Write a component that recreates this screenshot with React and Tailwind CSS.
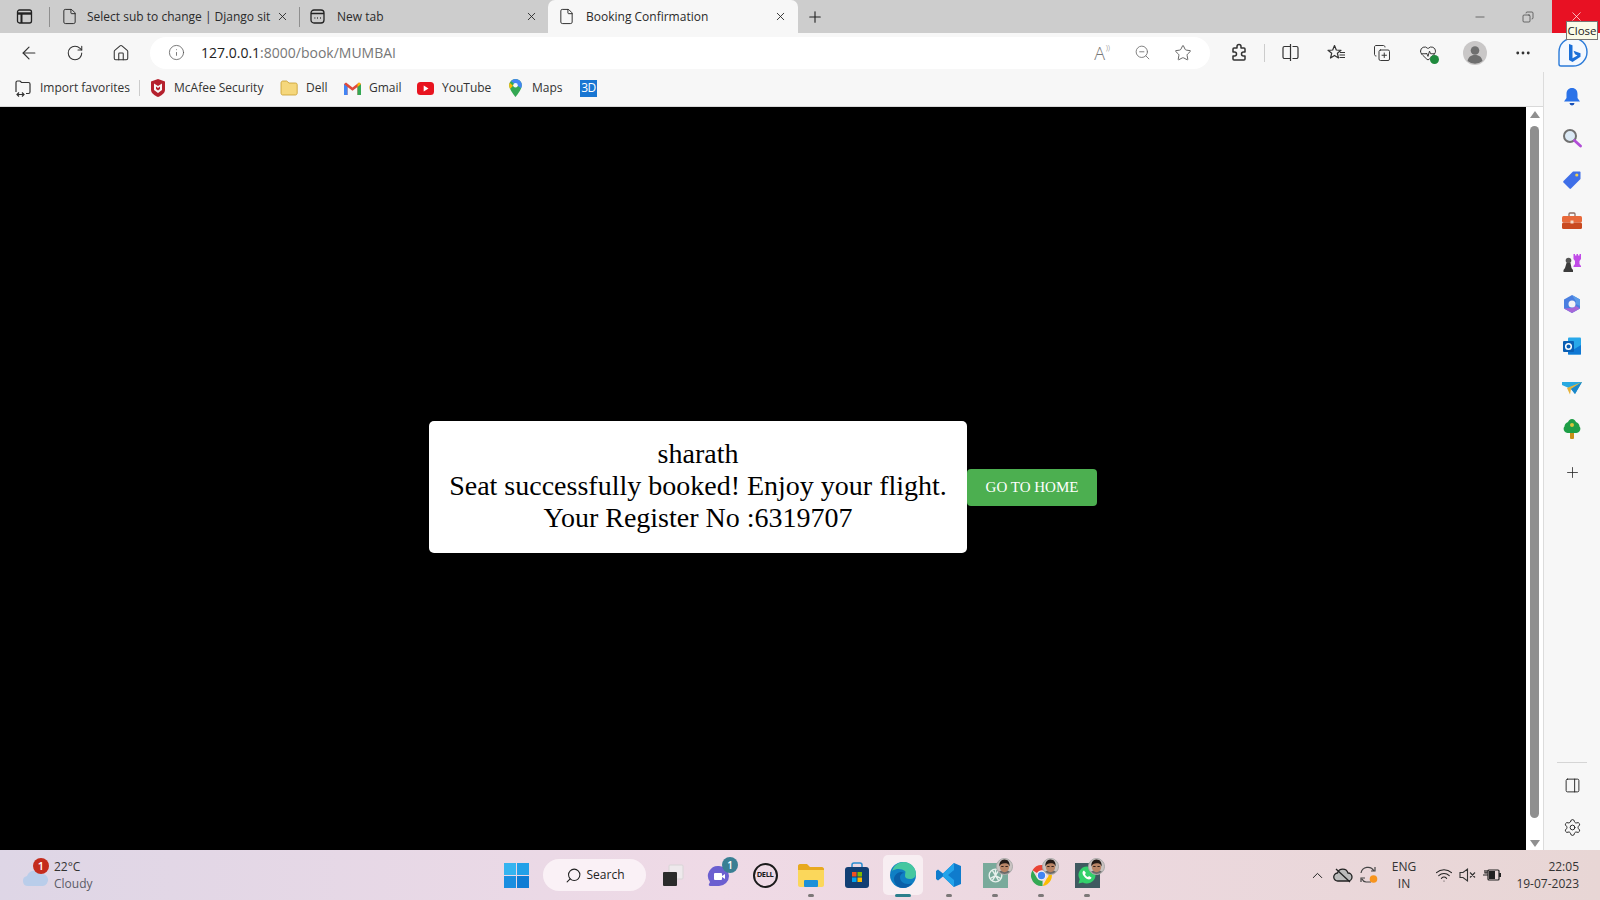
import {
  ArrowLeft, RotateCw, House, Info, ZoomOut, Star, Plus, X, Minus, File, Settings,
  ChevronUp, Wifi, PanelRight, Search, MoreHorizontal, Copy, HeartPulse, CopyPlus,
} from 'lucide-react'

const uiFont = "font-['Open_Sans','Noto_Sans',sans-serif]"

// small face badge that sits on the pinned taskbar apps
const Face = () => (
  <span className="absolute -top-[5px] -right-[5px] w-[17px] h-[17px] rounded-full bg-[#b8b0ae] border border-[#aaa] overflow-hidden">
    <svg viewBox="0 0 16 16" className="w-full h-full">
      <rect width="16" height="16" fill="#c9c4c2" />
      <path d="M1 16c.5-3 3-4 7-4s6.500 1 7 4Z" fill="#6b6b6b" />
      <ellipse cx="8" cy="8.500" rx="5" ry="5.500" fill="#b98566" />
      <path d="M2.500 8C2 2.500 5.500.5 8.500.5S14 3.500 13.500 8C12.500 5 10.500 4.500 8 4.500S3.500 5.500 2.500 8Z" fill="#231a16" />
      <path d="M4.500 8h2.500M9 8h2.500" stroke="#2a1c16" strokeWidth="1" />
    </svg>
  </span>
)

const Tab = ({ icon, title, active, box, gap }) => (
  <div className={`flex items-center h-[33px] shrink-0 ${box} ${active ? 'bg-[#f7f7f7] rounded-t-[7px]' : ''}`}>
    {icon}
    <span className={`${gap} text-[12px] text-[#2a2a2a] whitespace-nowrap overflow-hidden flex-1`}>{title}</span>
    <X size={13} strokeWidth={1.6} className="text-[#222] shrink-0" />
  </div>
)

const Bookmark = ({ icon, label, width }) => (
  <div className={`flex items-center shrink-0 ${width}`}>
    {icon}
    <span className="text-[12px] text-[#333] whitespace-nowrap">{label}</span>
  </div>
)

const ToolIcon = ({ children }) => (
  <div className="w-[46px] h-[39px] flex items-center justify-center shrink-0 text-[#333]">{children}</div>
)

const SideIcon = ({ children }) => (
  <div className="h-[41.5px] w-full flex items-center justify-center shrink-0">{children}</div>
)

const TaskIcon = ({ children, dot, active }) => (
  <div className="relative w-[46px] h-[50px] flex items-center justify-center shrink-0">
    {active && <div className="absolute left-[3px] right-[3px] top-[5px] bottom-[5px] rounded-[5px] bg-[#f8eef2]" />}
    <div className="relative">{children}</div>
    {dot && <div className="absolute bottom-[3px] left-1/2 -translate-x-1/2 w-[6px] h-[3px] rounded-full bg-[#7c7878]" />}
    {active && <div className="absolute bottom-[3px] left-1/2 -translate-x-1/2 w-[16px] h-[3px] rounded-full bg-[#2b7f8c]" />}
  </div>
)

export default function App() {
  return (
    <div className={`w-[1600px] h-[900px] overflow-hidden flex flex-col relative ${uiFont}`}>
      {/* tab strip */}
      <div className="h-[33px] bg-[#cdcdcd] flex items-center shrink-0">
        <div className="w-[49px] flex justify-center">
          <svg width="17" height="17" viewBox="0 0 17 17" fill="none" stroke="#222" strokeWidth="1.3">
            <rect x="1.500" y="2" width="14" height="13" rx="2" />
            <path d="M2 5.500h13" strokeWidth="2.400" />
            <path d="M5.500 5v10" strokeWidth="2" />
          </svg>
        </div>
        <div className="w-px h-[20px] bg-[#8f8f8f]" />
        <Tab box="w-[249px] pl-[11px] pr-[10px]" gap="ml-[9px] pr-[8px]" title="Select sub to change | Django sit" icon={<File size={17} strokeWidth={1.3} className="text-[#222] shrink-0" />} />
        <div className="w-px h-[20px] bg-[#8f8f8f]" />
        <Tab box="w-[248px] pl-[9px] pr-[10px]" gap="ml-[11px]" title="New tab" icon={
          <svg width="17" height="17" viewBox="0 0 17 17" fill="none" stroke="#222" strokeWidth="1.3" className="shrink-0">
            <rect x="2" y="2" width="13" height="13" rx="3" />
            <path d="M2 5.500h13M5.500 10h.8M8.200 10h.8M11 10h.8" />
          </svg>
        } />
        <Tab active box="w-[250px] pl-[10px] pr-[11px]" gap="ml-[11px]" title="Booking Confirmation" icon={<File size={17} strokeWidth={1.3} className="text-[#222] shrink-0" />} />
        <Plus size={18} strokeWidth={1.5} className="ml-[8px] text-[#222]" />
        <div className="ml-auto flex items-center h-full">
          <Minus size={14} strokeWidth={1.1} className="text-[#333] mr-[35px]" />
          <Copy size={12} strokeWidth={1.3} className="text-[#333] mr-[18px] -scale-x-100" />
          <div className="w-[48px] h-full bg-[#e81123] flex items-center justify-center">
            <X size={15} strokeWidth={1.1} className="text-white" />
          </div>
        </div>
      </div>

      {/* address bar row */}
      <div className="h-[39px] bg-[#f7f7f7] flex items-center pl-[6px] shrink-0">
        <ToolIcon><ArrowLeft size={20} strokeWidth={1.4} /></ToolIcon>
        <ToolIcon><RotateCw size={18} strokeWidth={1.4} /></ToolIcon>
        <ToolIcon><House size={18} strokeWidth={1.4} /></ToolIcon>
        <div className="ml-[6px] w-[1060px] h-[32px] bg-white rounded-full flex items-center pl-[18px] pr-[18px] shrink-0">
          <Info size={17} strokeWidth={1.1} className="text-[#555]" />
          <span className="ml-[16px] text-[14px] text-[#222]">127.0.0.1<span className="text-[#777]">:8000/book/MUMBAI</span></span>
          <div className="ml-auto flex items-center gap-[23px] text-[#777]">
            <span className="text-[18px] leading-none relative pr-[5px] mr-[1px] font-light">A<span className="absolute -top-[1px] right-0 text-[8px]">))</span></span>
            <ZoomOut size={17} strokeWidth={1.3} />
            <Star size={18} strokeWidth={1.2} className="text-[#555]" />
          </div>
        </div>
        <div className="ml-[6px]">
          <ToolIcon>
            <svg width="18" height="19" viewBox="0 0 18 19" fill="none" stroke="#333" strokeWidth="1.500" strokeLinejoin="round">
              <path d="M7 3.500a2 2 0 0 1 4 0V5h3a1 1 0 0 1 1 1v3h-1.500a2 2 0 0 0 0 4H15v3a1 1 0 0 1-1 1H4a1 1 0 0 1-1-1v-3h1.500a2 2 0 0 0 0-4H3V6a1 1 0 0 1 1-1h3Z" />
            </svg>
          </ToolIcon>
        </div>
        <div className="w-px h-[18px] bg-[#ccc] mx-[2px]" />
        <ToolIcon>
          <svg width="19" height="19" viewBox="0 0 19 19" fill="none" stroke="#333" strokeWidth="1.200">
            <path d="M9.500 1v17M9.500 3.500H3.500a1.500 1.500 0 0 0-1.500 1.500v9a1.500 1.500 0 0 0 1.500 1.500h6M11.500 3.500h4a1.500 1.500 0 0 1 1.500 1.500v9a1.500 1.500 0 0 1-1.500 1.500h-4" />
          </svg>
        </ToolIcon>
        <ToolIcon>
          <svg width="19" height="18" viewBox="0 0 19 18" fill="none" stroke="#333" strokeWidth="1.200" strokeLinejoin="round">
            <path d="M7.500 1.500 9.300 6 14 6.300l-3.600 3 1.100 4.700-4-2.600-4 2.600 1.200-4.700L1 6.300 5.700 6Z" />
            <path d="M13 8.500h5M12.500 11h5.500M12.500 13.500h5.500" />
          </svg>
        </ToolIcon>
        <ToolIcon><CopyPlus size={18} strokeWidth={1.3} /></ToolIcon>
        <ToolIcon>
          <div className="relative">
            <HeartPulse size={18} strokeWidth={1.3} />
            <div className="absolute -bottom-[2px] -right-[2px] w-[9px] h-[9px] rounded-full bg-[#1f8a3d]" />
          </div>
        </ToolIcon>
        <div className="ml-[1px]">
          <ToolIcon>
            <svg width="24" height="24" viewBox="0 0 24 24">
              <circle cx="12" cy="12" r="12" fill="#c9c7c7" />
              <circle cx="12" cy="9.500" r="4.300" fill="#6f6f6f" />
              <path d="M4.500 20c1-4.500 4-6 7.500-6s6.500 1.500 7.500 6a12 12 0 0 1-15 0Z" fill="#6f6f6f" />
            </svg>
          </ToolIcon>
        </div>
        <div className="ml-[2px]"><ToolIcon><MoreHorizontal size={18} strokeWidth={1.8} /></ToolIcon></div>
        <div className="w-[53px] flex justify-center">
          <svg width="32" height="34" viewBox="0 0 32 34" fill="none">
            <path d="M16 2a14 14 0 0 1 0 28H4c-1 0-2-1-2-2V16A14 14 0 0 1 16 2Z" fill="#f4f8fe" stroke="#2a7ad8" strokeWidth="1.400" />
            <path d="M12 8l3.500 1.200v13l5-2.800-2.500-1.200-1.500-3.500 7 2.500v3.600L15.500 26 12 24Z" fill="#1a6fd8" />
          </svg>
        </div>
      </div>

      {/* body: bookmarks + page on the left, edge sidebar on the right */}
      <div className="flex flex-1 min-h-0">
        <div className="w-[1543px] flex flex-col">
          <div className="h-[35px] bg-[#f7f7f7] border-b border-[#d9d9d9] flex items-center pl-[14px] pb-[2px] shrink-0">
            <Bookmark width="w-[125px]" label="Import favorites" icon={
              <svg width="18" height="18" viewBox="0 0 18 18" fill="none" stroke="#333" strokeWidth="1.200" className="mr-[8px]">
                <path d="M2 13V3.500C2 2.500 2.500 2 3.500 2H6l1.500 1.500h7c1 0 1.500.5 1.500 1.500v8c0 1-.5 1.500-1.500 1.500H12" />
                <path d="M3 15.500h7M5 13.500l-2 2 2 2M8 13.500l2 2-2 2" />
              </svg>
            } />
            <Bookmark width="w-[11px]" icon={<div className="w-px h-[16px] bg-[#ccc]" />} />
            <Bookmark width="w-[130px]" label="McAfee Security" icon={
              <svg width="16" height="18" viewBox="0 0 16 18" className="mr-[8px]">
                <path d="M1 2.500 8 0l7 2.500V11c0 3-3.500 5.500-7 7-3.500-1.500-7-4-7-7Z" fill="#b5212e" />
                <path d="M4 4.500 8 7l4-2.500v6.500L8 14 4 11Z" fill="#f7f7f7" />
                <path d="M6 7.500 8 9l2-1.500V10l-2 1.500L6 10Z" fill="#b5212e" />
              </svg>
            } />
            <Bookmark width="w-[64px]" label="Dell" icon={
              <svg width="18" height="16" viewBox="0 0 18 16" className="mr-[8px]">
                <path d="M1 3c0-1 .7-2 1.700-2h4L9 3h6.500c1 0 1.700.7 1.700 1.700V13c0 1-.7 2-1.700 2h-13C1.700 15 1 14 1 13Z" fill="#f5d77c" stroke="#c79c2c" strokeWidth="0.800" />
              </svg>
            } />
            <Bookmark width="w-[73px]" label="Gmail" icon={
              <svg width="17" height="13" viewBox="0 0 17 13" className="mr-[8px]">
                <path d="M0 2v11h3.500V5L8.500 8.800 13.500 5v8H17V2l-2-1.500L8.500 5.500 2 .5Z" fill="#e04a3b" />
                <path d="M0 2v11h3.500V5Z" fill="#4285f4" />
                <path d="M13.500 5v8H17V2Z" fill="#34a853" />
                <path d="M15 .5 17 2l-3.500 3V2Z" fill="#fbbc04" />
              </svg>
            } />
            <Bookmark width="w-[92px]" label="YouTube" icon={
              <svg width="17" height="13" viewBox="0 0 17 13" className="mr-[8px]">
                <rect width="17" height="13" rx="3.500" fill="#e8141f" />
                <path d="M6.700 3.500 11.500 6.500 6.700 9.500Z" fill="#fff" />
              </svg>
            } />
            <Bookmark width="w-[76px]" label="Maps" icon={
              <svg width="13" height="18" viewBox="0 0 13 18" className="mr-[10px]">
                <path d="M6.500 0A6.300 6.300 0 0 0 .2 6.300C.2 11 6.500 18 6.500 18s6.300-7 6.300-11.700A6.300 6.300 0 0 0 6.500 0Z" fill="#34a853" />
                <path d="M6.500 0a6.300 6.300 0 0 1 6.300 6.300c0 1-.3 2-.7 3L2 2.200A6.300 6.300 0 0 1 6.500 0Z" fill="#4285f4" />
                <path d="M.7 3.800 4 6.800 1 10C.5 8.800.2 7.500.2 6.300c0-.9.200-1.700.5-2.500Z" fill="#fbbc04" />
                <circle cx="6.500" cy="6.300" r="2.300" fill="#f7f7f7" />
              </svg>
            } />
            <div className="w-[17px] h-[17px] -ml-[5px] bg-[#1976d2] text-white text-[12px] leading-[16px] text-center tracking-tighter">3D</div>
          </div>

          <div className="flex flex-1 min-h-0">
            <main className="w-[1526px] bg-black flex items-center justify-center pt-[17px]">
              <div className="flex items-center font-['Liberation_Serif',serif]">
                <div className="w-[538px] h-[132px] pb-[2px] bg-white rounded-[5px] flex flex-col items-center justify-center text-black text-[28px] leading-[32px] text-center">
                  <div>sharath</div>
                  <div>Seat successfully booked! Enjoy your flight.</div>
                  <div>Your Register No :6319707</div>
                </div>
                <button className="w-[130px] h-[37px] bg-[#4caf50] text-white text-[15px] rounded-[4px]">GO TO HOME</button>
              </div>
            </main>
            <div className="w-[17px] bg-white flex flex-col items-center shrink-0 pt-[4px] pb-[3px]">
              <div className="w-0 h-0 border-x-[5px] border-x-transparent border-b-[7px] border-b-[#8f8f8f]" />
              <div className="w-[9px] flex-1 mt-[8px] mb-[22px] bg-[#8f8f8f] rounded-full" />
              <div className="w-0 h-0 border-x-[5px] border-x-transparent border-t-[7px] border-t-[#8f8f8f]" />
            </div>
          </div>
        </div>

        {/* edge sidebar */}
        <div className="w-[57px] bg-[#f7f7f7] border-l border-[#dcdcdc] flex flex-col items-center pt-[4px] pb-[2px]">
          <SideIcon>
            <svg width="18" height="20" viewBox="0 0 18 20">
              <path d="M9 1c3.500 0 5.500 2.500 5.500 6v4l2.500 3.500H1L3.500 11V7C3.500 3.500 5.500 1 9 1Z" fill="#2a72e8" />
              <path d="M6.500 16h5a2.500 2.500 0 0 1-5 0Z" fill="#1650b8" />
            </svg>
          </SideIcon>
          <SideIcon>
            <svg width="20" height="20" viewBox="0 0 20 20">
              <circle cx="8" cy="8" r="6" fill="#dbe9f5" stroke="#707070" strokeWidth="2" />
              <path d="m12.500 12.500 6 5.500" stroke="#b14dd6" strokeWidth="2.800" strokeLinecap="round" />
            </svg>
          </SideIcon>
          <SideIcon>
            <svg width="20" height="20" viewBox="0 0 20 20">
              <path d="M11 1.500h6.500c.6 0 1 .4 1 1V9L9 18.500c-.5.500-1 .5-1.500 0l-6-6c-.5-.5-.5-1 0-1.500Z" fill="#3f6fe8" />
              <circle cx="14.800" cy="5" r="1.600" fill="#f2cf4a" />
            </svg>
          </SideIcon>
          <SideIcon>
            <svg width="20" height="18" viewBox="0 0 20 18">
              <path d="M7 4V2c0-.6.4-1 1-1h4c.6 0 1 .4 1 1v2" fill="none" stroke="#8d6e63" strokeWidth="1.300" />
              <rect y="4" width="20" height="6.500" rx="1.500" fill="#e8693a" />
              <rect y="10.500" width="20" height="6.500" rx="1.500" fill="#c9491f" />
              <rect x="8.500" y="8.500" width="3" height="3" fill="#f4d9c6" />
            </svg>
          </SideIcon>
          <SideIcon>
            <svg width="20" height="20" viewBox="0 0 20 20">
              <path d="M11.500 1h1.500v1.500h1.500V1H16v1.500h1.500V1H19v5l-1.500 2v3l1.500 2v1h-7.500v-1l1.500-2V8l-1.500-2Z" fill="#c14be8" />
              <circle cx="6.500" cy="7.500" r="2.800" fill="#555" />
              <path d="M4.500 10h4l1 5 1.500 2v2H1.500v-2L3 15Z" fill="#3c3c3c" />
            </svg>
          </SideIcon>
          <SideIcon>
            <svg width="20" height="20" viewBox="0 0 20 20" fill="none">
              <path d="M10 1 2 5.500v9L10 19l8-4.500v-9Z" fill="#4a7fe0" />
              <path d="M10 1l8 4.500V12l-4-2V7.500Z" fill="#5a9be8" />
              <path d="M2 14.500 10 19l8-4.500-4-2.500-4 2Z" fill="#a667d8" />
              <circle cx="10" cy="10" r="3.500" fill="#f3f3f6" />
            </svg>
          </SideIcon>
          <SideIcon>
            <svg width="20" height="20" viewBox="0 0 20 20">
              <rect x="6" y="1.500" width="13" height="17" rx="1" fill="#28a8ea" />
              <path d="M6 9l6.500 4L19 9v9.500H6Z" fill="#0f78d4" />
              <rect x="1" y="5" width="11" height="11" rx="1" fill="#0a5fb4" />
              <circle cx="6.500" cy="10.500" r="2.800" fill="none" stroke="#fff" strokeWidth="1.500" />
            </svg>
          </SideIcon>
          <SideIcon>
            <svg width="20" height="16" viewBox="0 0 20 16">
              <path d="M0 3h20L13 15 9 10 0 6Z" fill="#29a9e0" />
              <path d="M20 3 9 10l-1 5.500L5 9Z" fill="#e6b23a" />
              <path d="M20 3 9 10l4 5Z" fill="#1c87c9" />
            </svg>
          </SideIcon>
          <SideIcon>
            <svg width="18" height="20" viewBox="0 0 18 20">
              <rect x="7" y="12" width="4" height="8" rx="1" fill="#c99018" />
              <path d="M9 0c2 0 3.500 1.500 4 3 2 .5 3.500 2.500 3.500 4.500 2 2 .5 6.500-3 6.500H4.500C1 14-.5 9.500 1.500 7.500 1.500 5.500 3 3.500 5 3c.5-1.500 2-3 4-3Z" fill="#1e9e46" />
              <circle cx="9" cy="6" r="2" fill="#d8c23c" />
            </svg>
          </SideIcon>
          <div className="h-[46px] flex items-center justify-center"><Plus size={17} strokeWidth={1.1} className="text-[#222]" /></div>
          <div className="mt-auto w-[30px] h-px bg-[#d5d5d5] mb-[2px]" />
          <SideIcon><PanelRight size={17} strokeWidth={1.3} className="text-[#222]" /></SideIcon>
          <SideIcon><Settings size={19} strokeWidth={1.2} className="text-[#222]" /></SideIcon>
        </div>
      </div>

      {/* taskbar */}
      <div className="h-[50px] shrink-0 flex items-center bg-gradient-to-r from-[#ded6e6] via-[#efdae6] via-45% to-[#e8d6d5] relative">
        <div className="w-[493px] flex items-center pl-[21px] shrink-0">
          <div className="relative w-[28px] h-[22px] mt-[5px]">
            <svg width="28" height="20" viewBox="0 0 28 20">
              <path d="M7 19a5 5 0 0 1-1-9.900A8 8 0 0 1 20 7a6 6 0 0 1 2 12Z" fill="#b9cdea" />
            </svg>
            <div className="absolute -top-[9px] left-[12px] w-[16px] h-[16px] rounded-full bg-[#c42b1c] text-white text-[11px] leading-[16px] text-center font-semibold">1</div>
          </div>
          <div className="ml-[5px] text-[12px] leading-[17px] text-[#333]">
            <div>22°C</div>
            <div className="text-[#5b5b66]">Cloudy</div>
          </div>
        </div>
        <div className="w-[46px] flex justify-center shrink-0">
          <svg width="25" height="25" viewBox="0 0 25 25">
            <rect width="12" height="12" fill="#35b4f0" />
            <rect x="13" width="12" height="12" fill="#22a0e8" />
            <rect y="13" width="12" height="12" fill="#1a8ee0" />
            <rect x="13" y="13" width="12" height="12" fill="#0f7cd4" />
          </svg>
        </div>
        <div className="ml-[4px] w-[103px] h-[32px] rounded-full bg-[#faf1f6] flex items-center justify-center gap-[5px] shrink-0 text-[#222]">
          <Search size={17} strokeWidth={1.5} className="-scale-x-100" />
          <span className="text-[12px]">Search</span>
        </div>
        <div className="ml-[4px] flex items-center">
          <TaskIcon>
            <svg width="22" height="22" viewBox="0 0 22 22">
              <rect x="7" y="1" width="14" height="14" rx="1" fill="#eee9ec" stroke="#d8d5d6" />
              <rect x="1" y="8" width="14" height="14" rx="1" fill="#2b2b2b" />
            </svg>
          </TaskIcon>
          <TaskIcon>
            <svg width="24" height="24" viewBox="0 0 24 24">
              <path d="M12 3a10 10 0 0 1 0 20H3c-1 0-1.500-1-1-2l1-2A10 10 0 0 1 12 3Z" fill="#6b5fd0" />
              <rect x="7" y="10" width="8" height="7" rx="1" fill="#fff" />
              <path d="M15 13l3-2v5l-3-2Z" fill="#fff" />
            </svg>
            <span className="absolute -top-[6px] -right-[7px] w-[16px] h-[16px] rounded-full bg-[#3a7f93] text-white text-[10px] leading-[16px] text-center font-semibold">1</span>
          </TaskIcon>
          <TaskIcon>
            <div className="w-[25px] h-[25px] rounded-full border-[2px] border-[#1a1a1a] flex items-center justify-center text-[7.5px] font-bold text-[#1a1a1a] tracking-tighter">DELL</div>
          </TaskIcon>
          <TaskIcon dot>
            <svg width="26" height="23" viewBox="0 0 26 23">
              <path d="M0 2c0-1 .7-2 2-2h7l3 3h12c1 0 2 1 2 2v3H0Z" fill="#e8a91e" />
              <path d="M0 6h26v15c0 1-1 2-2 2H2c-1 0-2-1-2-2Z" fill="#fbd75b" />
              <rect x="6" y="16" width="14" height="7" rx="1" fill="#1c90d8" />
            </svg>
          </TaskIcon>
          <TaskIcon>
            <svg width="24" height="26" viewBox="0 0 24 26">
              <path d="M7 6V3c0-1 1-2 2-2h6c1 0 2 1 2 2v3" fill="none" stroke="#2a8cd0" strokeWidth="1.500" />
              <rect y="5" width="24" height="21" rx="3" fill="#123f74" />
              <rect x="7" y="10" width="4.500" height="4.500" fill="#f25022" />
              <rect x="12.500" y="10" width="4.500" height="4.500" fill="#7fba00" />
              <rect x="7" y="15.500" width="4.500" height="4.500" fill="#00a4ef" />
              <rect x="12.500" y="15.500" width="4.500" height="4.500" fill="#ffb900" />
            </svg>
          </TaskIcon>
          <TaskIcon active>
            <svg width="26" height="26" viewBox="0 0 26 26">
              <circle cx="13" cy="13" r="13" fill="#0f7fc4" />
              <path d="M2 9C4 3 9 0 14 0c6 0 12 5 12 12 0 3-3 5-6 5-3 0-5-1-5-3 0-3 1-4 0-5-3-2-8-3-13 0Z" fill="#45c7a0" />
              <path d="M10 15c0 4 3 7 8 7 1.500 0 3-.5 4-1-2 3-5 5-9 5-6 0-9-5-9-9 0-3 3-7 7-7 2 0 3 1 3 1-2 0-4 2-4 4Z" fill="#0a5fa8" />
            </svg>
          </TaskIcon>
          <TaskIcon dot>
            <svg width="26" height="26" viewBox="0 0 26 26">
              <path d="M18 1 25 4v18l-7 3L7 14.500 2 18.500 0 17v-8l2-1.500 5 4Z" fill="#0f7ccd" />
              <path d="M18 1v24L7 14.500V11.500Zm0 7-6 5 6 5Z" fill="#23a3ea" fillRule="evenodd" />
            </svg>
          </TaskIcon>
          <TaskIcon dot>
            <div className="relative w-[25px] h-[25px] bg-[#79aa9b] flex items-center justify-center">
              <svg width="19" height="19" viewBox="0 0 24 24" fill="none" stroke="#e7f0ec" strokeWidth="1.700">
                <circle cx="12" cy="12" r="8" />
                <path d="M12 4v8l7 4M12 12l-7 4M8 5.500l8 13M16 5.500l-8 13" />
              </svg>
              <Face />
            </div>
          </TaskIcon>
          <TaskIcon dot>
            <div className="relative">
              <svg width="25" height="25" viewBox="0 0 48 48">
                <path d="M24 4a20 20 0 0 1 17.300 10H24a10 10 0 0 0-8.700 5L6.700 14A20 20 0 0 1 24 4Z" fill="#ea4335" />
                <path d="M41.300 14A20 20 0 0 1 26 44l8.700-15a10 10 0 0 0-.7-15Z" fill="#fbbc04" />
                <path d="M26 44A20 20 0 0 1 6.700 14l8.600 15a10 10 0 0 0 10.700 5Z" fill="#34a853" />
                <circle cx="24" cy="24" r="9" fill="#f5f5f5" />
                <circle cx="24" cy="24" r="7" fill="#4285f4" />
              </svg>
              <Face />
            </div>
          </TaskIcon>
          <TaskIcon dot>
            <div className="relative w-[25px] h-[25px] bg-[#3f5a60] flex items-center justify-center">
              <svg width="20" height="20" viewBox="0 0 20 20">
                <path d="M10 1.500a8.500 8.500 0 0 0-7.300 12.800L1.500 18.500l4.300-1.100A8.500 8.500 0 1 0 10 1.500Z" fill="#33d16b" />
                <path d="M7 5.500c-.5 0-1.500 1-1.500 2.500s1.500 3.500 2.500 4.500 3 2 4 2 2.500-1 2.500-2l-2.500-1.500-1 1c-1 0-3-2-3-3l1-1Z" fill="#fff" />
              </svg>
              <Face />
            </div>
          </TaskIcon>
        </div>

        <div className="ml-auto flex items-center text-[#222] pr-[21px]">
          <ChevronUp size={17} strokeWidth={1.4} />
          <svg width="20" height="17" viewBox="0 0 20 17" className="ml-[7px]" fill="none" stroke="#222" strokeWidth="1.300">
            <path d="M5 14a4 4 0 0 1-.5-8A5.500 5.500 0 0 1 15 6a4 4 0 0 1 0 8Z" fill="#bbb" />
            <path d="M3 2l14 13" />
          </svg>
          <svg width="18" height="18" viewBox="0 0 18 18" className="ml-[7px]" fill="none" stroke="#444" strokeWidth="1.200">
            <path d="M1 7a7 7 0 0 1 13-2M15 1v4h-4M11 16H6a5 5 0 0 1-4-3M1 16v-4h4" />
            <circle cx="13.500" cy="13" r="3.800" fill="#f7941d" stroke="none" />
          </svg>
          <div className="ml-[9px] w-[34px] text-[12px] leading-[17px] text-center text-[#333]">
            <div>ENG</div>
            <div>IN</div>
          </div>
          <Wifi size={18} strokeWidth={1.4} className="ml-[14px]" />
          <svg width="18" height="16" viewBox="0 0 18 16" className="ml-[6px]" fill="none" stroke="#333" strokeWidth="1.100">
            <path d="M1 5.500h3L8.500 2v12L4 10.500H1ZM11 5.500l5 5M16 5.500l-5 5" />
          </svg>
          <svg width="18" height="14" viewBox="0 0 18 14" className="ml-[6px]">
            <rect x="5" y="2" width="11" height="10" rx="1" fill="none" stroke="#222" strokeWidth="1.200" />
            <rect x="6" y="3" width="6" height="8" fill="#222" />
            <rect x="16" y="5" width="2" height="4" fill="#222" />
            <path d="M0 7h5M2 2v3h2V2" stroke="#222" strokeWidth="1.200" fill="none" />
          </svg>
          <div className="ml-[15px] w-[63px] text-[12px] leading-[17px] text-right text-[#333]">
            <div>22:05</div>
            <div>19-07-2023</div>
          </div>
        </div>
      </div>

      {/* tooltip over the window close button */}
      <div className="absolute top-[21px] left-[1566px] h-[19px] w-[32px] text-center bg-[#fbfbe8] border border-[#767676] text-[11.5px] leading-[17px] text-[#222]">Close</div>
    </div>
  )
}
